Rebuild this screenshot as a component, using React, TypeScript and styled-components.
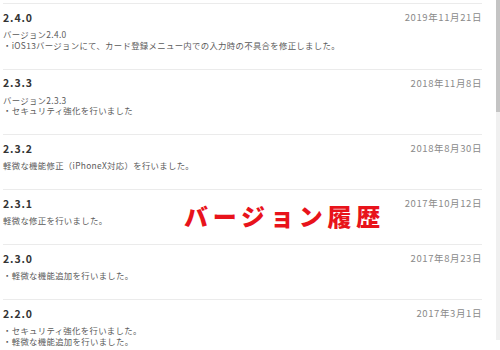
import React from 'react'
import styled, { createGlobalStyle } from 'styled-components'

const GlobalStyle = createGlobalStyle`
  html, body {
    margin: 0;
    padding: 0;
    background: #ffffff;
  }
  body {
    font-family: "Noto Sans CJK JP", "Noto Sans", sans-serif;
  }
`

type Release = {
  version: string
  date: string
  lines: string[]
}

const releases: Release[] = [
  {
    version: '2.4.0',
    date: '2019年11月21日',
    lines: ['バージョン2.4.0', '・iOS13バージョンにて、カード登録メニュー内での入力時の不具合を修正しました。'],
  },
  {
    version: '2.3.3',
    date: '2018年11月8日',
    lines: ['バージョン2.3.3', '・セキュリティ強化を行いました'],
  },
  {
    version: '2.3.2',
    date: '2018年8月30日',
    lines: ['軽微な機能修正（iPhoneX対応）を行いました。'],
  },
  {
    version: '2.3.1',
    date: '2017年10月12日',
    lines: ['軽微な修正を行いました。'],
  },
  {
    version: '2.3.0',
    date: '2017年8月23日',
    lines: ['・軽微な機能追加を行いました。'],
  },
  {
    version: '2.2.0',
    date: '2017年3月1日',
    lines: ['・セキュリティ強化を行いました。', '・軽微な機能追加を行いました。'],
  },
]

const Page = styled.div`
  position: relative;
  display: flex;
  width: 500px;
  height: 350px;
  overflow: hidden;
  background: #fff;
`

const List = styled.div`
  flex: 1;
  padding: 3px 14px 0 3px;
`

const Item = styled.div`
  border-top: 1px solid #ebebeb;
  padding: 6px 0 18.5px;
`

const Head = styled.div`
  display: flex;
  justify-content: space-between;
  align-items: center;
  height: 14px;
`

const Version = styled.span`
  font-size: 10.5px;
  font-weight: 700;
  letter-spacing: 0.9px;
  color: #333;
`

const Date = styled.span`
  font-size: 9.5px;
  letter-spacing: 0.6px;
  color: #8a8a8a;
`

const Body = styled.div`
  margin-top: 5px;
  font-size: 8.4px;
  line-height: 10.5px;
  letter-spacing: 0.32px;
  color: #5a5a5a;
  white-space: nowrap;
`

const Overlay = styled.div`
  position: absolute;
  left: 184px;
  top: 200px;
  font-size: 24px;
  font-weight: 900;
  letter-spacing: 4.8px;
  color: #e8131b;
  line-height: 32px;
`

const ScrollTrack = styled.div`
  width: 4px;
  height: 340px;
  background: #f0f0f0;
  display: flex;
  flex-direction: column;
`

const ScrollThumb = styled.div`
  height: 112px;
  background: #c4c4c4;
`

export default function App() {
  return (
    <>
      <GlobalStyle />
      <Page>
        <List>
          {releases.map((r) => (
            <Item key={r.version}>
              <Head>
                <Version>{r.version}</Version>
                <Date>{r.date}</Date>
              </Head>
              <Body>
                {r.lines.map((l, i) => (
                  <div key={i}>{l}</div>
                ))}
              </Body>
            </Item>
          ))}
        </List>
        <ScrollTrack>
          <ScrollThumb />
        </ScrollTrack>
        <Overlay>バージョン履歴</Overlay>
      </Page>
    </>
  )
}
